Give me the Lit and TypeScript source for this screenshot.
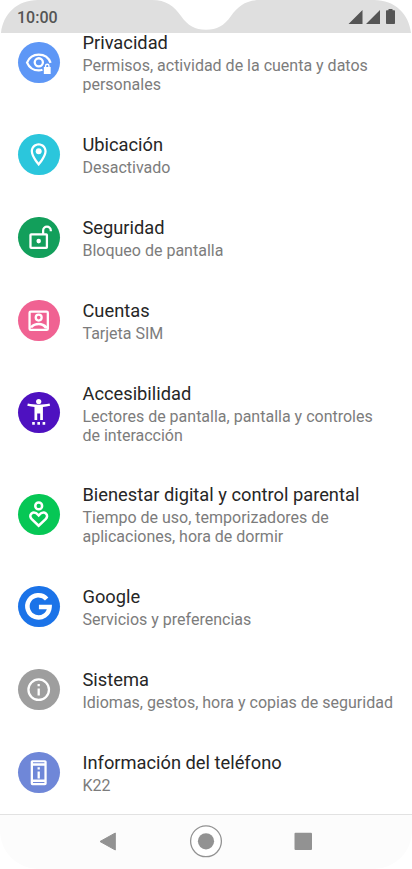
import { LitElement, html, css, svg, TemplateResult } from "lit";
import { customElement } from "lit/decorators.js";
import { styleMap } from "lit/directives/style-map.js";

interface Item {
  title: string;
  lines: string[];
  color: string;
  icon: TemplateResult;
}

const items: Item[] = [
  {
    title: "Privacidad",
    lines: ["Permisos, actividad de la cuenta y datos", "personales"],
    color: "#5e97f6",
    icon: svg`<g fill="none" stroke="#fff" stroke-width="2"><path d="M15.300 18.200Q13.800 18.700 12 18.700C7.400 18.700 3.600 16.100 1.800 11.900C3.600 7.700 7.400 5 12 5C16.800 5 20.800 7.800 22.400 12.200"/><circle cx="12.100" cy="11.700" r="3.600"/></g><path fill="#fff" d="M16.500 15.800h.9v-1a2.100 2.100 0 0 1 4.200 0v1h.9v6.200h-6zM18.600 15.800h1.800v-.9a.9.9 0 0 0-1.800 0z"/>`,
  },
  {
    title: "Ubicación",
    lines: ["Desactivado"],
    color: "#2bc6dc",
    icon: svg`<path fill="#fff" d="M12 2C8.130 2 5 5.130 5 9c0 5.250 7 13 7 13s7-7.750 7-13c0-3.870-3.130-7-7-7zM7 9c0-2.760 2.240-5 5-5s5 2.240 5 5c0 2.880-2.880 7.190-5 9.880C9.920 16.210 7 11.850 7 9z"/><circle cx="12" cy="9" r="2.600" fill="#fff"/>`,
  },
  {
    title: "Seguridad",
    lines: ["Bloqueo de pantalla"],
    color: "#129f5b",
    icon: svg`<g fill="none" stroke="#fff" stroke-width="2"><rect x="4.800" y="9" width="14.400" height="12" rx=".6"/><path d="M15.900 9V5.700a3.350 3.350 0 0 1 6.700 0V6.300"/></g><circle cx="12" cy="15" r="2" fill="#fff"/>`,
  },
  {
    title: "Cuentas",
    lines: ["Tarjeta SIM"],
    color: "#f06292",
    icon: svg`<g fill="none" stroke="#fff" stroke-width="2"><rect x="4" y="4" width="16" height="16" rx="1"/><circle cx="12" cy="9.300" r="2.600"/></g><path fill="#fff" d="M4.500 17.100C6.400 15 9 13.900 12 13.900s5.600 1.100 7.500 3.200v1.700h-2.100C15.900 16.700 14.100 16 12 16s-3.900.7-5.400 2.100H4.500z"/>`,
  },
  {
    title: "Accesibilidad",
    lines: ["Lectores de pantalla, pantalla y controles", "de interacción"],
    color: "#4e11c0",
    icon: svg`<path fill="#fff" d="M21.500 4c-2.910.7-6.170 1-9.500 1s-6.590-.3-9.500-1L2 6c2.260.55 4.300.83 6.300 1v11.300h2.400v-5.600h2.600v5.600h2.400V7c2-.17 4.040-.45 6.300-1l-.5-2z"/><circle cx="12" cy="2.200" r="2.300" fill="#fff"/><path fill="#fff" d="M6.300 20.200h2.300v2.300H6.300zM10.850 20.200h2.300v2.300h-2.300zM15.400 20.200h2.300v2.300h-2.300z"/>`,
  },
  {
    title: "Bienestar digital y control parental",
    lines: ["Tiempo de uso, temporizadores de", "aplicaciones, hora de dormir"],
    color: "#06c755",
    icon: svg`<g fill="none" stroke="#fff" stroke-width="2.200"><circle cx="12" cy="4.300" r="3"/><path d="M12 21.700L5.900 15.800C4.300 14.200 4.200 12.200 5.700 10.900C7.300 9.600 9.700 10.100 12 12.600C14.300 10.100 16.700 9.600 18.300 10.900C19.800 12.200 19.700 14.200 18.100 15.800z"/></g>`,
  },
  {
    title: "Google",
    lines: ["Servicios y preferencias"],
    color: "#1b73e8",
    icon: svg`<path fill="none" stroke="#fff" stroke-width="4" d="M19 5.200A9.700 9.700 0 1 0 21.500 12.300H12.200"/>`,
  },
  {
    title: "Sistema",
    lines: ["Idiomas, gestos, hora y copias de seguridad"],
    color: "#9e9e9e",
    icon: svg`<circle cx="12" cy="12" r="9" fill="none" stroke="#fff" stroke-width="2"/><path fill="#fff" d="M11 7h2v2h-2zM11 11h2v6h-2z"/>`,
  },
  {
    title: "Información del teléfono",
    lines: ["K22"],
    color: "#6f87d8",
    icon: svg`<path fill="#fff" fill-rule="evenodd" d="M6.500 1h11A1.500 1.500 0 0 1 19 2.500v19a1.500 1.500 0 0 1-1.500 1.500h-11A1.500 1.500 0 0 1 5 21.500v-19A1.500 1.500 0 0 1 6.500 1zM7 2.900v.9h10v-.9zM7 6v12h10V6zM7 20.200v.9h10v-.9z"/><path fill="#fff" d="M11 7.200h2v2h-2zM11 11h2v6h-2z"/>`,
  },
];

@customElement("settings-row")
class SettingsRow extends LitElement {
  static properties = { item: { attribute: false } };
  declare item: Item;

  static styles = css`
    :host {
      display: flex;
      align-items: center;
      box-sizing: border-box;
      padding: 19.800px 0 18.100px 18.400px;
    }
    .badge {
      flex: none;
      width: 41.200px;
      height: 41.200px;
      border-radius: 50%;
      display: grid;
      place-items: center;
      margin: 0 22.900px 1.700px 0;
    }
    .glyph {
      width: 27.400px;
      height: 27.400px;
      overflow: visible;
    }
    .title {
      font-size: 18.300px;
      line-height: 23.100px;
      margin-bottom: 2.900px;
      color: #262626;
      white-space: nowrap;
    }
    .line {
      font-size: 16px;
      line-height: 18.950px;
      color: #7c7c7c;
      white-space: nowrap;
    }
  `;

  render() {
    const { title, lines, color, icon } = this.item;
    return html`
      <div class="badge" style=${styleMap({ background: color })}>
        <svg class="glyph" viewBox="0 0 24 24">${icon}</svg>
      </div>
      <div>
        <div class="title">${title}</div>
        ${lines.map((l) => html`<div class="line">${l}</div>`)}
      </div>
    `;
  }
}

@customElement("app-root")
class AppRoot extends LitElement {
  static styles = css`
    :host {
      display: flex;
      flex-direction: column;
      width: 412px;
      height: 869px;
      overflow: hidden;
      background: #fff;
      font-family: Roboto, "Noto Sans", sans-serif;
    }
    .status {
      flex: none;
      display: grid;
      height: 33px;
    }
    .status > * {
      grid-area: 1 / 1;
    }
    .content {
      display: flex;
      justify-content: space-between;
      align-items: center;
      padding: 1px 16px 0 17px;
    }
    .clock {
      font-size: 16px;
      font-weight: 500;
      color: #555;
    }
    .list {
      flex: 1;
      min-height: 0;
      overflow: hidden;
    }
    .first {
      margin-top: -21.400px;
    }
    .nav {
      flex: none;
      box-sizing: border-box;
      height: 55px;
      border-top: 1.500px solid #e2e2e2;
      background: #fcfcfc;
      border-radius: 0 0 38px 38px;
    }
  `;

  render() {
    return html`
      <div class="status">
        <svg width="412" height="33" viewBox="0 0 412 33">
          <path fill="#dfdfdf" d="M1 33C3 14 17 0 38 0H152C166 0 174 6 181 16C188 26 195 29.700 206 29.700C217 29.700 224 26 231 16C238 6 246 0 260 0H374C395 0 409 14 411 33z"/>
        </svg>
        <div class="content">
          <span class="clock">10:00</span>
          <svg width="48" height="16" viewBox="0 0 48 16" fill="#555">
            <path d="M14.500 1v14H.5zM32 1v14H18z"/>
            <path d="M40.500 0h4v1.200h1.700q.8 0 .8.800v12.200q0 .8-.8.800h-7.400q-.8 0-.8-.8V2q0-.8.800-.8h1.700z"/>
          </svg>
        </div>
      </div>
      <div class="list">
        ${items.map((i, n) => html`<settings-row class=${n === 0 ? "first" : ""} .item=${i}></settings-row>`)}
      </div>
      <div class="nav">
        <svg width="412" height="53" viewBox="0 0 412 53">
          <path fill="#929292" stroke="#929292" stroke-width="1" stroke-linejoin="round" d="M100 26.500L115.300 18V35z"/>
          <circle cx="206" cy="26.300" r="15.400" fill="#fff" stroke="#929292" stroke-width="1.300"/>
          <circle cx="206" cy="26.300" r="8.100" fill="#929292"/>
          <rect x="294.500" y="17.800" width="17.500" height="17.200" rx="1" fill="#929292"/>
        </svg>
      </div>
    `;
  }
}
